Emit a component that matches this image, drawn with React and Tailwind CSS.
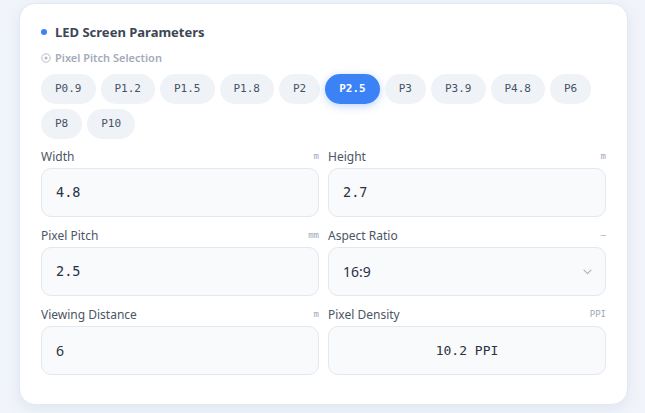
import React from "react";

const pitches = ["P0.9", "P1.2", "P1.5", "P1.8", "P2", "P2.5", "P3", "P3.9", "P4.8", "P6", "P8", "P10"];
const active = "P2.5";

const mono = "font-['DejaVu_Sans_Mono',monospace]";

function Field({ label, unit, children, center }) {
  return (
    <div className="flex flex-col">
      <div className="flex h-[15px] items-center justify-between mb-[4px]">
        <span className="text-[12px] leading-[15px] text-[#4b5565]">{label}</span>
        <span className={`${mono} text-[9px] text-[#a0a8b8]`}>{unit}</span>
      </div>
      <div
        className={`h-[49px] rounded-[10px] border border-[#e2e7f0] bg-[#f8fafc] bg-[radial-gradient(#eef1f6_0.6px,transparent_0.6px)] bg-[size:6px_6px] flex items-center px-[14px] ${
          center ? "justify-center" : ""
        }`}
      >
        {children}
      </div>
    </div>
  );
}

export default function App() {
  return (
    <div className="min-h-screen bg-[#f1f4fa] bg-[radial-gradient(#e4e8f1_0.6px,transparent_0.6px)] bg-[size:4px_4px] pl-[19px] pr-[17px] pt-[3px] font-['Noto_Sans',sans-serif]">
      <div className="rounded-[16px] border border-[#e3e8f2] bg-white shadow-[0_4px_14px_rgba(150,165,200,0.18)] px-[21px] pt-[19px] pb-[29px]">
        {/* heading */}
        <div className="flex h-[18px] items-center gap-[8px]">
          <span className="block h-[6px] w-[6px] rounded-full bg-[#3b82f6]" />
          <span className="text-[13px] font-bold leading-[18px] text-[#3d4656]">LED Screen Parameters</span>
        </div>

        {/* pitch selector */}
        <div className="mt-[10px] flex h-[14px] items-center gap-[4px]">
          <svg width="10" height="10" viewBox="0 0 10 10" fill="none">
            <circle cx="5" cy="5" r="4.2" stroke="#b6bdca" strokeWidth="1" />
            <circle cx="5" cy="5" r="1.6" fill="#b6bdca" />
          </svg>
          <span className="text-[11px] font-semibold leading-[14px] text-[#a3abba]">Pixel Pitch Selection</span>
        </div>

        <div className="mt-[9px] flex flex-wrap gap-[5px]">
          {pitches.map((p) =>
            p === active ? (
              <span
                key={p}
                className={`${mono} h-[30px] rounded-full bg-[#3b82f6] px-[14px] text-[11px] font-bold leading-[30px] text-white shadow-[0_2px_8px_rgba(59,130,246,0.35)]`}
              >
                {p}
              </span>
            ) : (
              <span
                key={p}
                className={`${mono} h-[30px] rounded-full bg-[#eff3f8] px-[14px] text-[11px] leading-[30px] text-[#465163]`}
              >
                {p}
              </span>
            )
          )}
        </div>

        {/* parameters */}
        <div className="mt-[10px] grid grid-cols-2 gap-x-[9px] gap-y-[11px]">
          <Field label="Width" unit="m">
            <span className={`${mono} text-[13.5px] text-[#2a3140]`}>4.8</span>
          </Field>
          <Field label="Height" unit="m">
            <span className={`${mono} text-[13.5px] text-[#2a3140]`}>2.7</span>
          </Field>
          <Field label="Pixel Pitch" unit="mm">
            <span className={`${mono} text-[13.5px] text-[#2a3140]`}>2.5</span>
          </Field>
          <Field label="Aspect Ratio" unit="—">
            <div className="flex w-full items-center justify-between">
              <span className="text-[14px] text-[#2a3140]">16:9</span>
              <svg width="9" height="6" viewBox="0 0 9 6" fill="none" className="mr-[-1px]">
                <path d="M1 1.2 L4.5 4.6 L8 1.2" stroke="#a9b0bd" strokeWidth="1.1" strokeLinecap="round" strokeLinejoin="round" />
              </svg>
            </div>
          </Field>
          <Field label="Viewing Distance" unit="m">
            <span className="text-[14px] text-[#2a3140]">6</span>
          </Field>
          <Field label="Pixel Density" unit="PPI" center>
            <span className={`${mono} text-[13px] text-[#2a3140]`}>10.2 PPI</span>
          </Field>
        </div>
      </div>
    </div>
  );
}
